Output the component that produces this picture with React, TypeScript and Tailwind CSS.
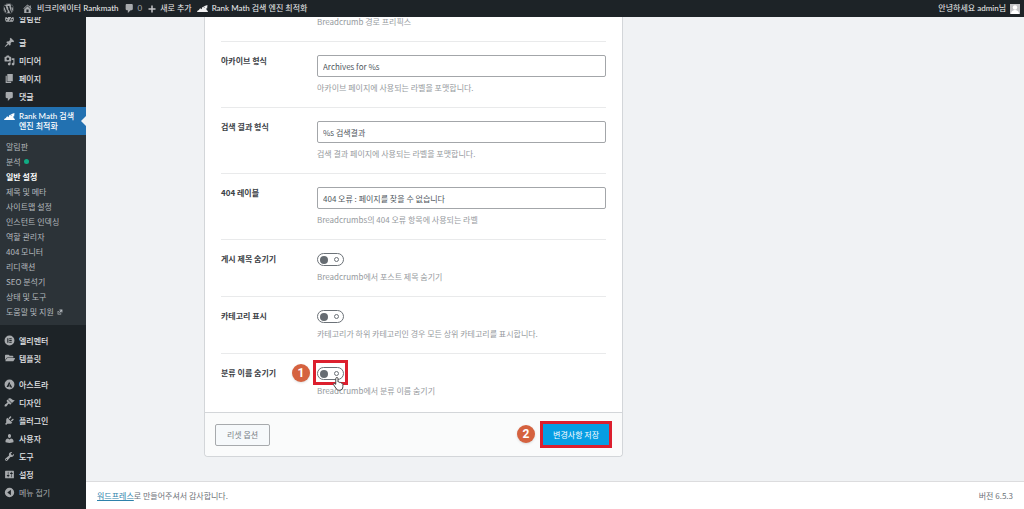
import { ReactNode } from "react";
import { FaFolderOpen, FaWordpress } from "react-icons/fa";

const icons = {
  dashboard:
    "M3.76 16h12.48A7.98 7.98 0 0 0 18 11c0-4.41-3.58-8-8-8s-8 3.59-8 8c0 1.9.66 3.64 1.76 5zM9 5h2v2H9zM5 7h2v2H5zm8 0h2v2h-2zM9 14l3-5 1 1-2 4zM4 11h2v2H4zm10 0h2v2h-2z",
  home: "M16 8.5l1.53 1.53-1.06 1.06L10 4.6l-6.47 6.49-1.06-1.06L10 2.5l4 4v-2h2v4zm-6-2.46l6 5.99V18H4v-5.97zM12 17v-5H8v5h4z",
  comment: "M5 2h9c1.1 0 2 .9 2 2v7c0 1.1-.9 2-2 2h-2l-5 5v-5H5c-1.1 0-2-.9-2-2V4c0-1.1.9-2 2-2z",
  plus: "M17 8.500v3h-5.500V17h-3v-5.500H3v-3h5.500V3h3v5.500z",
  post: "M10.44 3.02l1.82-1.82 6.36 6.35-1.83 1.82c-1.05-.68-2.48-.57-3.41.36l-.75.75c-.92.93-1.04 2.35-.35 3.41l-1.83 1.82-2.41-2.41-2.8 2.79c-.42.42-3.38 2.71-3.8 2.29s1.86-3.39 2.28-3.81l2.79-2.79L4.1 9.36l1.83-1.82c1.05.69 2.48.57 3.4-.36l.75-.75c.93-.92 1.05-2.35.36-3.41z",
  media:
    "M13 11V4c0-.55-.45-1-1-1h-1.67L9 1H5L3.67 3H2c-.55 0-1 .45-1 1v7c0 .55.45 1 1 1h10c.55 0 1-.45 1-1zM7 4.5c1.38 0 2.5 1.12 2.5 2.5S8.38 9.5 7 9.5 4.5 8.38 4.5 7 5.62 4.5 7 4.5zM14 6h5v10.5c0 1.38-1.12 2.5-2.5 2.5S14 17.88 14 16.5s1.12-2.5 2.5-2.5c.17 0 .34.02.5.05V9h-3V6zm-4 8.05V13h2v3.5c0 1.38-1.12 2.5-2.5 2.5S7 17.88 7 16.5 8.12 14 9.5 14c.17 0 .34.02.5.05z",
  page: "M6 15V2h10v13H6zm-1 1h8v2H3V5h2v11z",
  rankMath: "M0 16.500c.5-2.500 2-4 4-4V11l3.500-1.500v2L9 10.500V8l3.500-1.500v2.500L14 7.500 12.500 6 19 3.500l-.5 6.500-1.200-1.200V12.500c1.500.5 2.500 2 2.700 4z",
  elementor: "M10 1a9 9 0 1 0 0 18 9 9 0 0 0 0-18zM6 6h2v8H6zm3.500 0H14v1.700H9.500zm0 3.200H14v1.700H9.500zm0 3.200H14V14H9.500z",
  astra: "M10 1a9 9 0 1 0 0 18 9 9 0 0 0 0-18zm-.6 3.800 1.700 3.400L8 14.500H4.600zm2.200 4.400 3.400 6.300h-3l-.8-1.800H9.200z",
  appearance:
    "M14.48 11.06L7.41 3.99l1.5-1.5c.5-.56 2.3-.47 3.51.32 1.21.8 1.43 1.28 2.91 2.1 1.18.64 2.45 1.26 4.45.85zm-.71.71L6.7 4.7 4.93 6.47c-.39.39-.39 1.02 0 1.41l1.06 1.06c.39.39.39 1.03 0 1.42-.6.6-1.43 1.11-2.21 1.69-.35.26-.7.53-1.01.84C1.43 14.23.4 16.08 1.4 17.07c.99 1 2.84-.03 4.18-1.36.31-.31.58-.66.85-1.02.57-.78 1.08-1.61 1.69-2.21.39-.39 1.02-.39 1.41 0l1.06 1.06c.39.39 1.02.39 1.41 0z",
  plugins:
    "M13.11 4.36L9.87 7.6 8 5.73l3.24-3.24c.35-.34 1.05-.2 1.56.32.52.51.66 1.21.31 1.55zm-8 1.77l.91-1.12 9.01 9.01-1.19.84c-.71.71-2.63 1.16-3.82 1.16H6.14L4.9 17.26c-.59.59-1.54.59-2.12 0-.59-.58-.59-1.53 0-2.12l1.24-1.24v-3.88c0-1.13.4-3.19 1.09-3.89zm7.26 3.97l3.24-3.24c.34-.35 1.04-.21 1.55.31.52.51.66 1.21.31 1.55l-3.24 3.25z",
  users:
    "M10 9.25c-2.27 0-2.73-3.44-2.73-3.44C7 4.02 7.82 2 9.97 2c2.16 0 2.98 2.02 2.71 3.81 0 0-.41 3.44-2.68 3.44zm0 2.57L12.72 10c2.39 0 4.52 2.33 4.52 4.53v2.49s-3.65 1.13-7.24 1.13c-3.65 0-7.24-1.13-7.24-1.13v-2.49c0-2.25 1.94-4.48 4.47-4.48z",
  tools:
    "M16.68 9.77c-1.34 1.34-3.3 1.67-4.95.99l-5.41 6.52c-.99.99-2.59.99-3.58 0s-.99-2.59 0-3.57l6.52-5.42c-.68-1.65-.35-3.61.99-4.95 1.28-1.28 3.12-1.62 4.72-1.06l-2.89 2.89 2.82 2.82 2.86-2.87c.53 1.58.18 3.39-1.08 4.65zM3.81 16.21c.4.39 1.04.39 1.43 0 .4-.4.4-1.04 0-1.43-.39-.4-1.03-.4-1.43 0-.39.39-.39 1.03 0 1.43z",
  settings:
    "M18 16V4c0-.55-.45-1-1-1H3c-.55 0-1 .45-1 1v12c0 .55.45 1 1 1h14c.55 0 1-.45 1-1zM8 11h1c.55 0 1 .45 1 1s-.45 1-1 1H8v1.5c0 .28-.22.5-.5.5s-.5-.22-.5-.5V13H6c-.55 0-1-.45-1-1s.45-1 1-1h1V5.5c0-.28.22-.5.5-.5s.5.22.5.5V11zm5-2h-1c-.55 0-1-.45-1-1s.45-1 1-1h1V5.5c0-.28.22-.5.5-.5s.5.22.5.5V7h1c.55 0 1 .45 1 1s-.45 1-1 1h-1v5.5c0 .28-.22.5-.5.5s-.5-.22-.5-.5V9z",
  collapse: "M10 1.500a8.500 8.500 0 1 0 0 17 8.500 8.500 0 0 0 0-17zM12.500 15 6 10l6.500-5z",
  external: "M8 2h10v10h-3V7.500L9.500 13 7 10.500 12.500 5H8zM2 7h4v2.500H4.500v6h7V14H14v4H2z",
};

type IconName = keyof typeof icons;

function Icon({ name, className = "size-[11px]" }: { name: IconName; className?: string }) {
  return (
    <svg viewBox="0 0 20 20" fill="currentColor" fillRule="evenodd" className={`shrink-0 ${className}`} aria-hidden="true">
      <path d={icons[name]} />
    </svg>
  );
}

const contentMenu: { icon: IconName; label: string }[] = [
  { icon: "post", label: "글" },
  { icon: "media", label: "미디어" },
  { icon: "page", label: "페이지" },
  { icon: "comment", label: "댓글" },
];

const subMenu = [
  "알림판",
  "분석",
  "일반 설정",
  "제목 및 메타",
  "사이트맵 설정",
  "인스턴트 인덱싱",
  "역할 관리자",
  "404 모니터",
  "리디랙션",
  "SEO 분석기",
  "상태 및 도구",
  "도움말 및 지원",
];

const systemMenu: { icon: IconName; label: string }[] = [
  { icon: "astra", label: "아스트라" },
  { icon: "appearance", label: "디자인" },
  { icon: "plugins", label: "플러그인" },
  { icon: "users", label: "사용자" },
  { icon: "tools", label: "도구" },
  { icon: "settings", label: "설정" },
];

function MenuItem({ icon, label }: { icon: ReactNode; label: string }) {
  return (
    <a href="#" className="flex h-[18px] items-center gap-1 pl-1 font-medium text-[#e4e5e7]">
      <span className="flex w-[11px] justify-center text-[#a7aaad]">{icon}</span>
      {label}
    </a>
  );
}

function AdminBar() {
  return (
    <header className="fixed inset-x-0 top-0 z-20 flex h-[17px] items-center gap-[5px] bg-[#1d2327] pr-1 pl-[3px] font-['Lato','Noto_Sans_CJK_KR',sans-serif] text-[#f0f0f1]">
      <a href="#" aria-label="WordPress" className="mr-[3px] text-[#a7aaad]">
        <FaWordpress className="size-[11px]" />
      </a>
      <a href="#" className="flex items-center gap-1">
        <Icon name="home" className="size-[11px] text-[#a7aaad]" />
        비크리에이터 Rankmath
      </a>
      <a href="#" className="flex items-center gap-[3px] text-[#a7aaad]">
        <Icon name="comment" />0
      </a>
      <a href="#" className="flex items-center gap-[3px]">
        <Icon name="plus" className="size-[10px] text-[#c3c4c7]" />
        새로 추가
      </a>
      <a href="#" className="flex items-center gap-1">
        <Icon name="rankMath" />
        Rank Math 검색 엔진 최적화
      </a>
      <a href="#" className="ml-auto flex items-center gap-1">
        안녕하세요 admin님
        <svg viewBox="0 0 10 10" className="size-[10px] bg-[#c3c4c7]" aria-hidden="true">
          <circle cx="5" cy="3.500" r="2.200" fill="#fff" />
          <path d="M1 10c0-3 2-4 4-4s4 1 4 4z" fill="#fff" />
        </svg>
      </a>
    </header>
  );
}

function Sidebar() {
  return (
    <nav className="w-[86px] shrink-0 bg-[#1d2327] pt-[9px]">
      <MenuItem icon={<Icon name="dashboard" />} label="알림판" />
      <div className="mt-[6px]">
        {contentMenu.map((item) => (
          <MenuItem key={item.label} icon={<Icon name={item.icon} />} label={item.label} />
        ))}
      </div>
      <a
        href="#"
        className="relative mt-[2px] flex h-7 gap-1 bg-[#2271b1] pt-1 pl-1 font-['Lato','Noto_Sans_CJK_KR',sans-serif] leading-[10px] font-medium text-white"
      >
        <Icon name="rankMath" />
        <span>
          Rank Math 검색
          <br />
          엔진 최적화
        </span>
        <span className="absolute top-[9px] right-0 border-y-[5px] border-r-[5px] border-y-transparent border-r-[#f0f2f4]" />
      </a>
      <ul className="bg-[#2c3338] pt-1 pb-[6px] pl-[6px] text-[#b4b9be]">
        {subMenu.map((label) => (
          <li key={label}>
            <a
              href="#"
              className={`flex h-[15px] items-center gap-[3px] ${label === "일반 설정" ? "font-bold text-white" : ""}`}
            >
              {label}
              {label === "분석" && <span className="size-[5px] rounded-full bg-[#10ac84]" />}
              {label === "도움말 및 지원" && <Icon name="external" className="size-[6px]" />}
            </a>
          </li>
        ))}
      </ul>
      <div className="mt-[6px]">
        <MenuItem icon={<Icon name="elementor" />} label="엘리멘터" />
        <MenuItem icon={<FaFolderOpen className="size-[10px]" />} label="템플릿" />
      </div>
      <div className="mt-2">
        {systemMenu.map((item) => (
          <MenuItem key={item.label} icon={<Icon name={item.icon} />} label={item.label} />
        ))}
        <button type="button" className="flex h-[18px] items-center gap-1 pl-1 text-[#a7aaad]">
          <Icon name="collapse" />
          메뉴 접기
        </button>
      </div>
    </nav>
  );
}

function Badge({ children, className }: { children: ReactNode; className: string }) {
  return (
    <span
      className={`absolute flex size-[18px] items-center justify-center rounded-full bg-[#d5623f] font-[Roboto] text-[12px] leading-none font-bold text-white shadow-sm ${className}`}
    >
      {children}
    </span>
  );
}

function TextRow({ id, label, value, help }: { id: string; label: string; value: string; help: string }) {
  return (
    <div className="flex border-t border-[#e9eaeb] pt-[13px] pb-3">
      <label htmlFor={id} className="w-24 shrink-0 font-bold text-[#3c4146]">
        {label}
      </label>
      <div className="flex-1">
        <input
          id={id}
          type="text"
          defaultValue={value}
          className="block h-[22px] w-full rounded-[2px] border border-[#a3a6a9] bg-white px-[5px] text-[#50575e]"
        />
        <p className="mt-1 leading-[14px] text-[#969a9e]">{help}</p>
      </div>
    </div>
  );
}

function ToggleRow({ id, label, help, children }: { id: string; label: string; help: string; children?: ReactNode }) {
  return (
    <div className="flex border-t border-[#e9eaeb] pt-[13px] pb-3">
      <label htmlFor={id} className="w-24 shrink-0 font-bold text-[#3c4146]">
        {label}
      </label>
      <div className="relative flex-1">
        <label className="relative flex h-[13px] w-[27px] items-center justify-between rounded-full border border-[#6c7278] pr-1 pl-[2px]">
          <input id={id} type="checkbox" className="absolute inset-0 appearance-none" />
          <span className="size-2 rounded-full bg-[#666c72]" />
          <span className="size-[5px] rounded-full border border-[#6c7278]" />
        </label>
        <p className="mt-1 leading-[14px] text-[#969a9e]">{help}</p>
        {children}
      </div>
    </div>
  );
}

export default function App() {
  return (
    <div className="flex min-h-screen bg-[#f0f2f4] font-['Noto_Sans_CJK_KR',sans-serif] text-[8px] leading-[11px]">
      <AdminBar />
      <Sidebar />
      <div className="flex min-w-0 flex-1 flex-col">
        <main className="flex-1 pl-[118px]">
          <form className="w-full max-w-[419px] rounded-b border border-t-0 border-[#d3d6d9] bg-white">
            <div className="px-4 pb-[2px]">
              <p className="pt-[15px] pb-3 pl-24 leading-[14px] text-[#969a9e]">Breadcrumb 경로 프리픽스</p>
              <TextRow
                id="archive-format"
                label="아카이브 형식"
                value="Archives for %s"
                help="아카이브 페이지에 사용되는 라벨을 포맷합니다."
              />
              <TextRow
                id="search-format"
                label="검색 결과 형식"
                value="%s 검색결과"
                help="검색 결과 페이지에 사용되는 라벨을 포맷합니다."
              />
              <TextRow
                id="404-label"
                label="404 레이블"
                value="404 오류 : 페이지를 찾을 수 없습니다"
                help="Breadcrumbs의 404 오류 항목에 사용되는 라벨"
              />
              <ToggleRow id="hide-title" label="게시 제목 숨기기" help="Breadcrumb에서 포스트 제목 숨기기" />
              <ToggleRow
                id="show-category"
                label="카테고리 표시"
                help="카테고리가 하위 카테고리인 경우 모든 상위 카테고리를 표시합니다."
              />
              <ToggleRow id="hide-taxonomy" label="분류 이름 숨기기" help="Breadcrumb에서 분류 이름 숨기기">
                <Badge className="top-[-3px] left-[-25px]">1</Badge>
                <span className="pointer-events-none absolute top-[-7px] left-[-4px] h-[25px] w-[35px] border-[3px] border-[#dc1f2e]" />
                <svg viewBox="0 0 16 20" className="absolute top-[9px] left-[15px] h-[15px] w-3" aria-hidden="true">
                  <path
                    d="M5 11V3.500a1.500 1.500 0 0 1 3 0V8c1-.6 2 0 2.300.8 1-.5 2 0 2.200.8 1-.3 2 .3 2 1.400v3c0 3-1.500 5-4.500 5-2.500 0-3.600-.8-5-3l-3-4.500c-.6-1.200.8-2 1.800-1z"
                    fill="#fff"
                    stroke="#444"
                    strokeWidth="1.300"
                  />
                </svg>
              </ToggleRow>
            </div>
            <div className="flex items-center justify-between rounded-b border-t border-[#d3d6d9] bg-[#fafbfb] px-[10px] py-2">
              <button
                type="reset"
                className="h-[22px] rounded-[2px] border border-[#a7aaad] bg-[#f6f9fb] px-[11px] text-[#7c8288]"
              >
                리셋 옵션
              </button>
              <div className="relative">
                <Badge className="top-1 left-[-23px]">2</Badge>
                <button type="submit" className="block h-[27px] border-[3px] border-[#dc1f2e] bg-[#069de3] px-[10px] text-white">
                  변경사항 저장
                </button>
              </div>
            </div>
          </form>
        </main>
        <footer className="flex h-7 items-center justify-between border-t border-[#dcdcde] bg-white px-[11px] text-[#6c7278]">
          <p>
            <a href="#" className="text-[#2e82ab] underline">
              워드프레스
            </a>
            로 만들어주셔서 감사합니다.
          </p>
          <p>버전 6.5.3</p>
        </footer>
      </div>
    </div>
  );
}
